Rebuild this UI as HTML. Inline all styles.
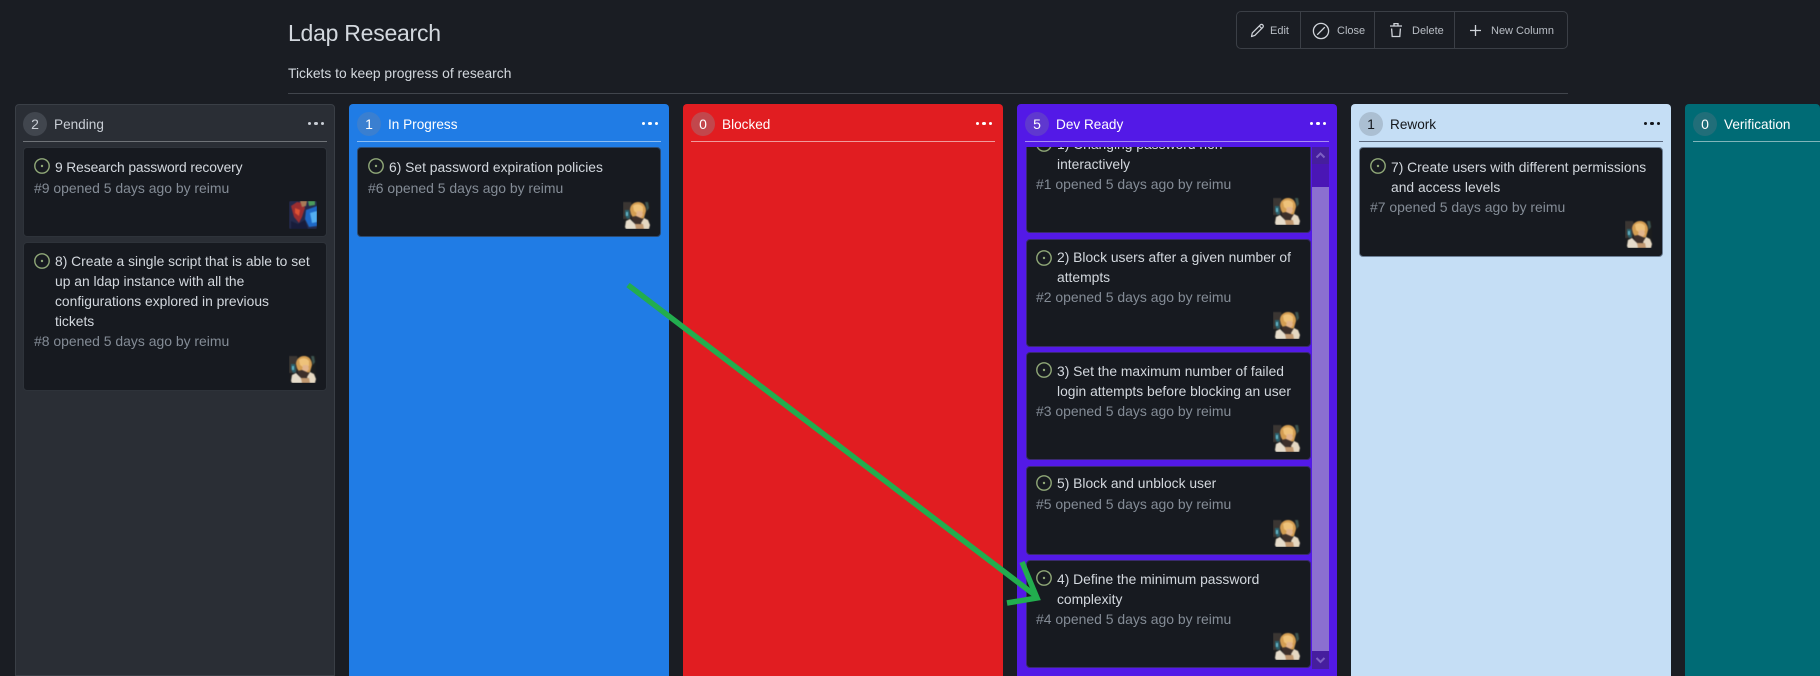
<!DOCTYPE html>
<html><head><meta charset="utf-8"><title>Ldap Research</title>
<style>
html,body{margin:0;padding:0;width:1820px;height:676px;overflow:hidden;background:#1a1d23}
body{position:relative;font-family:"Liberation Sans",sans-serif;font-size:13.85px;color:#d3d8de}
div,span,svg{position:absolute}
.t{white-space:nowrap;line-height:20px;height:20px}
.col{top:104px;width:320px;height:572px;border-radius:4px 4px 0 0;box-sizing:border-box;overflow:hidden}
.badge{left:8px;top:8px;width:24px;height:24px;border-radius:50%;text-align:center;line-height:24px;font-size:14px}
.name{left:39px;top:11px;line-height:20px;font-size:13.6px;white-space:nowrap}
.dots{left:292px;top:17px;width:18px;height:5px}
.dots i{position:absolute;top:1px;width:3.2px;height:3.2px;border-radius:50%;background:currentColor}
.dots i:nth-child(1){left:1px}.dots i:nth-child(2){left:7.4px}.dots i:nth-child(3){left:13.8px}
.hr{left:8px;width:304px;top:37px;height:1px}
.card{background:#171a20;border:1px solid #2e333a;border-radius:4px;box-sizing:border-box}
.meta{color:#848c96;font-size:13.95px}
</style></head><body>
<svg width="0" height="0" style="position:absolute">
<symbol id="op" viewBox="0 0 16 16"><circle cx="8" cy="8" r="7.2" fill="none" stroke="#90a878" stroke-width="1.4"/><circle cx="8" cy="8" r="1.2" fill="#90a878"/></symbol>
<symbol id="av" viewBox="0 0 28 28"><g style="filter:blur(.45px)">
<path d="M1 1h26v26H1z" fill="#1c1d1e"/>
<path d="M0 1h8l2 8-3 9H0z" fill="#3b3633"/>
<path d="M2 9l4 0 1 8-3 1-2-4z" fill="#2c5f6a"/><path d="M3 11h2v4H3z" fill="#63b4c6"/>
<path d="M7 9c0-5 4-8 8-8 5 0 8 4 8 9l-2 7-5 2-6-2-2-4z" fill="#d39d52"/>
<path d="M10 5c3-3 8-2 10 1l0 5-5 2-4-3z" fill="#eec27a"/>
<path d="M14 10h5l1 4-3 4-4-3z" fill="#e3b58c"/>
<path d="M22 1h3l1 6-2 3z" fill="#3c5450"/>
<path d="M8 16l5-1 7 3-1 4-7 2z" fill="#3d2f2a"/>
<path d="M3 20l4-2 5 5 2 5H3L2 26z" fill="#e6dccb"/>
<path d="M21 17l4 2 2 5-1 4h-6l-2-6z" fill="#e6d8c2"/>
<path d="M12 23h8l1 5h-8z" fill="#c0976f"/>
</g></symbol>
<symbol id="av2" viewBox="0 0 28 28"><g style="filter:blur(.5px)">
<rect width="28" height="28" rx="2" fill="#242a4c"/>
<path d="M2 5l6-4 6 1 2 5-3 9-3 6-5-6z" fill="#9c2e30"/>
<path d="M6 7l5 2-1 6-4-3z" fill="#dd5233"/>
<path d="M11 0h7l-1 5-4 1z" fill="#a97b58"/>
<path d="M19 0h7v4l-6 1z" fill="#4b9b5c"/>
<path d="M17 9l11-4v20l-8 1-4-8z" fill="#1e68c6"/>
<path d="M21 12l7-2v11l-5 1z" fill="#53aef0"/>
<path d="M2 20l7 3 7-4 3 9H2z" fill="#181c3a"/>
</g></symbol>
</svg>

<div class="t" style="left:288px;top:18px;font-size:23px;line-height:30px;height:30px;color:#d3d8de;letter-spacing:-.25px">Ldap Research</div>
<div class="t" style="left:288px;top:63px;color:#d3d8de">Tickets to keep progress of research</div>
<div style="left:288px;top:93px;width:1280px;height:1px;background:#41454c"></div>

<!-- buttons -->
<div style="left:1236px;top:11px;width:332px;height:38px;border:1px solid #3b3f46;border-radius:5px;box-sizing:border-box"></div>
<div style="left:1300px;top:11px;width:1px;height:38px;background:#3b3f46"></div>
<div style="left:1374px;top:11px;width:1px;height:38px;background:#3b3f46"></div>
<div style="left:1454px;top:11px;width:1px;height:38px;background:#3b3f46"></div>
<svg style="left:1250px;top:23px" width="16" height="15" viewBox="0 0 16 15" fill="none" stroke="#d0d4da" stroke-width="1.2" stroke-linejoin="round"><path d="M1.5 13.5l.8-3.6 8-8c.7-.7 1.8-.7 2.5 0s.7 1.8 0 2.5l-8 8z"/><path d="M9.3 3l2.6 2.6"/></svg>
<svg style="left:1312px;top:22px" width="18" height="18" viewBox="0 0 18 18" fill="none" stroke="#d0d4da" stroke-width="1.3"><circle cx="9" cy="9" r="7.6"/><path d="M5.2 12.8l7.6-7.6"/></svg>
<svg style="left:1389px;top:22px" width="14" height="16" viewBox="0 0 14 16" fill="none" stroke="#d0d4da" stroke-width="1.3"><path d="M1 4h12M5 3.5V1.6h4v1.9"/><path d="M2.6 6.5l.6 8h7.6l.6-8"/></svg>
<svg style="left:1469px;top:24px" width="13" height="13" viewBox="0 0 13 13" fill="none" stroke="#d0d4da" stroke-width="1.3"><path d="M6.5 1v11M1 6.5h11"/></svg>
<div class="t" style="left:1270px;top:21px;font-size:11px;color:#b9bec5">Edit</div>
<div class="t" style="left:1337px;top:21px;font-size:11px;color:#b9bec5">Close</div>
<div class="t" style="left:1412px;top:21px;font-size:11px;color:#b9bec5">Delete</div>
<div class="t" style="left:1491px;top:21px;font-size:11px;color:#b9bec5">New Column</div>

<!-- columns -->
<div class="col" style="left:15px;background:#2a2e35;border:1px solid #3a3f46"><div style="left:-1px;top:-1px;width:320px;height:572px;color:#c9ced5">
<div class="badge" style="background:#41464e">2</div><div class="name">Pending</div><div class="dots"><i></i><i></i><i></i></div><div class="hr" style="background:#6f7378"></div></div></div>
<div class="col" style="left:349px;background:#207ce5;color:#fff">
<div class="badge" style="background:#3a7fd0">1</div><div class="name">In Progress</div><div class="dots"><i></i><i></i><i></i></div><div class="hr" style="background:#8cbdf3"></div></div>
<div class="col" style="left:683px;background:#e11d21;color:#fff">
<div class="badge" style="background:#c2474c">0</div><div class="name">Blocked</div><div class="dots"><i></i><i></i><i></i></div><div class="hr" style="background:#f09a9c"></div></div>
<div class="col" style="left:1017px;background:#5319e7;color:#fff">
<div class="badge" style="background:#5f38cf">5</div><div class="name">Dev Ready</div><div class="dots"><i></i><i></i><i></i></div><div class="hr" style="background:#a98cf3"></div></div>
<div class="col" style="left:1351px;background:#c5def5;color:#14171c">
<div class="badge" style="background:#abbfd2">1</div><div class="name">Rework</div><div class="dots"><i></i><i></i><i></i></div><div class="hr" style="background:#5c6a80"></div></div>
<div class="col" style="left:1685px;width:135px;background:#006b75;color:#fff">
<div class="badge" style="background:#216e79">0</div><div class="name">Verification</div><div class="hr" style="width:127px;background:#80b5ba"></div></div>

<!-- Pending cards -->
<div class="card" style="left:23px;top:147px;width:304px;height:90px"></div>
<svg style="left:33.5px;top:158px" width="16" height="16"><use href="#op"/></svg>
<div class="t" style="left:55px;top:156.5px;letter-spacing:-.12px">9 Research password recovery</div>
<div class="t meta" style="left:34px;top:177.5px">#9 opened 5 days ago by reimu</div>
<svg style="left:288.5px;top:201px" width="28" height="28"><use href="#av2"/></svg>

<div class="card" style="left:23px;top:242px;width:304px;height:149px"></div>
<svg style="left:33.5px;top:253px" width="16" height="16"><use href="#op"/></svg>
<div class="t" style="left:55px;top:250.5px">8) Create a single script that is able to set</div>
<div class="t" style="left:55px;top:270.5px">up an ldap instance with all the</div>
<div class="t" style="left:55px;top:290.5px">configurations explored in previous</div>
<div class="t" style="left:55px;top:310.5px">tickets</div>
<div class="t meta" style="left:34px;top:330.5px">#8 opened 5 days ago by reimu</div>
<svg style="left:288.5px;top:355px" width="28" height="28"><use href="#av"/></svg>

<!-- In progress -->
<div class="card" style="left:357px;top:147px;width:304px;height:90px;border-color:#2c4a70"></div>
<svg style="left:367.5px;top:158px" width="16" height="16"><use href="#op"/></svg>
<div class="t" style="left:389px;top:156.5px">6) Set password expiration policies</div>
<div class="t meta" style="left:368px;top:177.5px">#6 opened 5 days ago by reimu</div>
<svg style="left:622.5px;top:201px" width="28" height="28"><use href="#av"/></svg>

<!-- Dev ready -->
<div style="left:1026px;top:147px;width:304px;height:522px;overflow:hidden">
<div class="card" style="left:0;top:-30px;width:285px;height:116px;border-color:#3a2a6e"></div>
<svg style="left:10px;top:-11px" width="16" height="16"><use href="#op"/></svg>
<div class="t" style="left:31px;top:-13.5px">1) Changing password non</div>
<div class="t" style="left:31px;top:6.5px">interactively</div>
<div class="t meta" style="left:10px;top:26.5px">#1 opened 5 days ago by reimu</div>
<svg style="left:247px;top:50px" width="28" height="28"><use href="#av"/></svg>

<div class="card" style="left:0;top:92px;width:285px;height:108px;border-color:#3a2a6e"></div>
<svg style="left:10px;top:102.5px" width="16" height="16"><use href="#op"/></svg>
<div class="t" style="left:31px;top:99.5px">2) Block users after a given number of</div>
<div class="t" style="left:31px;top:119.5px">attempts</div>
<div class="t meta" style="left:10px;top:139.5px">#2 opened 5 days ago by reimu</div>
<svg style="left:247px;top:164px" width="28" height="28"><use href="#av"/></svg>

<div class="card" style="left:0;top:205px;width:285px;height:108px;border-color:#3a2a6e"></div>
<svg style="left:10px;top:215px" width="16" height="16"><use href="#op"/></svg>
<div class="t" style="left:31px;top:213.5px">3) Set the maximum number of failed</div>
<div class="t" style="left:31px;top:233.5px">login attempts before blocking an user</div>
<div class="t meta" style="left:10px;top:253.5px">#3 opened 5 days ago by reimu</div>
<svg style="left:247px;top:277px" width="28" height="28"><use href="#av"/></svg>

<div class="card" style="left:0;top:319px;width:285px;height:89px;border-color:#3a2a6e"></div>
<svg style="left:10px;top:328px" width="16" height="16"><use href="#op"/></svg>
<div class="t" style="left:31px;top:326px">5) Block and unblock user</div>
<div class="t meta" style="left:10px;top:347px">#5 opened 5 days ago by reimu</div>
<svg style="left:247px;top:372px" width="28" height="28"><use href="#av"/></svg>

<div class="card" style="left:0;top:413px;width:285px;height:108px;border-color:#3a2a6e"></div>
<svg style="left:10px;top:423px" width="16" height="16"><use href="#op"/></svg>
<div class="t" style="left:31px;top:421.5px">4) Define the minimum password</div>
<div class="t" style="left:31px;top:441.5px">complexity</div>
<div class="t meta" style="left:10px;top:461.5px">#4 opened 5 days ago by reimu</div>
<svg style="left:247px;top:485px" width="28" height="28"><use href="#av"/></svg>
</div>
<!-- scrollbar -->
<div style="left:1312px;top:147px;width:17px;height:40px;background:#4a16b5"></div>
<div style="left:1312px;top:147px;width:17px;height:17px;background:#461e9e"></div>
<svg style="left:1312px;top:147px" width="17" height="17" viewBox="0 0 17 17" fill="none" stroke="#7d60c4" stroke-width="2"><path d="M4.5 10.5l4-4 4 4"/></svg>
<div style="left:1312px;top:187px;width:17px;height:464px;background:#8b6fd0"></div>
<div style="left:1312px;top:651px;width:17px;height:18px;background:#461e9e"></div>
<svg style="left:1312px;top:651px" width="17" height="18" viewBox="0 0 17 18" fill="none" stroke="#7d60c4" stroke-width="2"><path d="M4.5 7l4 4 4-4"/></svg>

<!-- Rework -->
<div class="card" style="left:1359px;top:147px;width:304px;height:110px;border-color:#6c7f95"></div>
<svg style="left:1369.5px;top:158px" width="16" height="16"><use href="#op"/></svg>
<div class="t" style="left:1391px;top:156.5px">7) Create users with different permissions</div>
<div class="t" style="left:1391px;top:176.5px">and access levels</div>
<div class="t meta" style="left:1370px;top:196.5px">#7 opened 5 days ago by reimu</div>
<svg style="left:1624.5px;top:220px" width="28" height="28"><use href="#av"/></svg>

<!-- arrow -->
<svg style="left:0;top:0" width="1820" height="676" fill="none" stroke="#22ad4e" stroke-width="5.5" stroke-linecap="butt" stroke-linejoin="miter"><path d="M628 285L1036 596"/><path d="M1022 562L1037 598L1007 603"/></svg>
</body></html>
